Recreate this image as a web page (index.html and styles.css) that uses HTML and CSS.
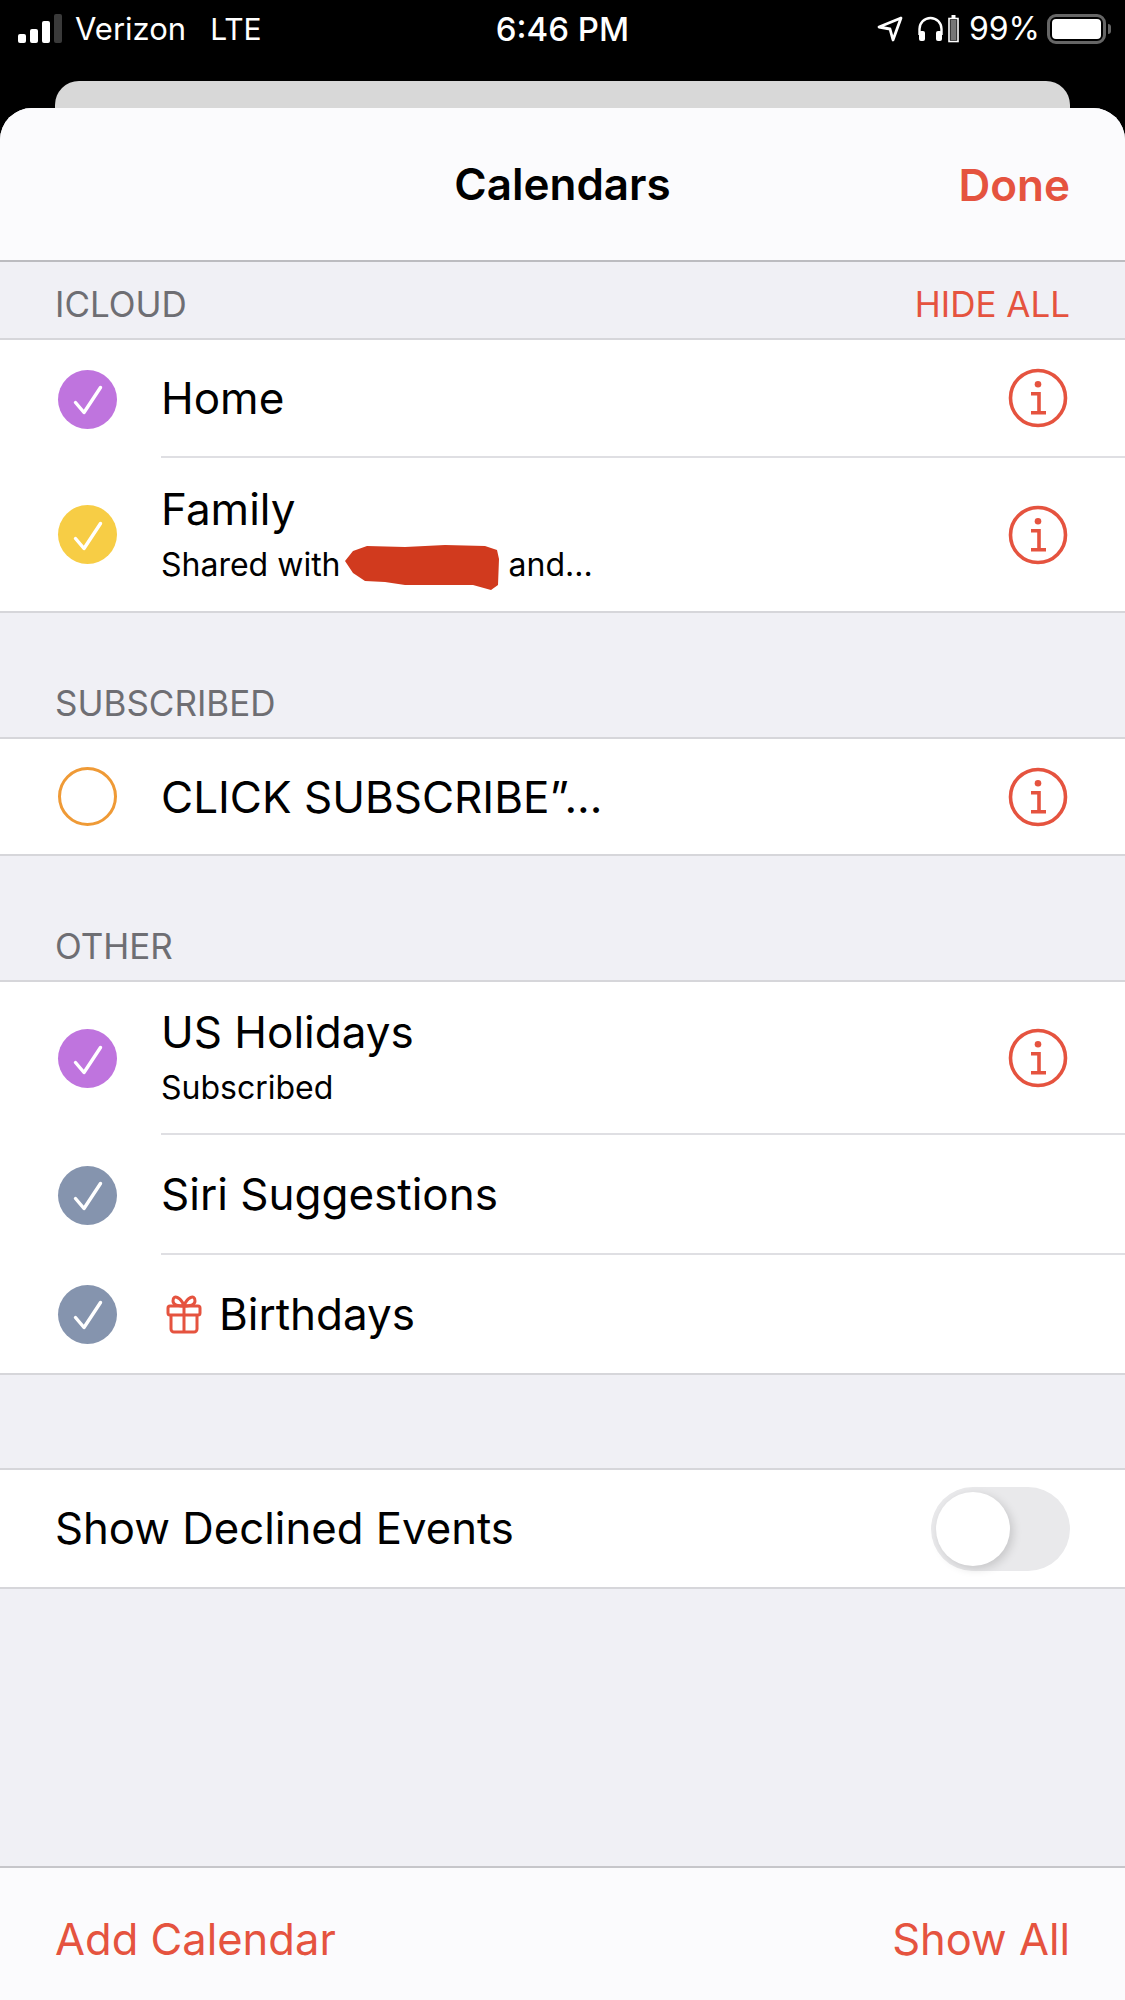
FILE: index.html
```html
<!DOCTYPE html>
<html lang="en">
<head>
    <meta charset="UTF-8">
    <link rel="stylesheet" href="styles.css">
    <title>Calendars</title>
</head>
<body>
    <div class="status-bar">
        <div class="status-left">
            <div class="signal">
                <span class="bar bar1"></span>
                <span class="bar bar2"></span>
                <span class="bar bar3"></span>
                <span class="bar bar4"></span>
            </div>
            <span class="carrier">Verizon</span>
            <span class="network">LTE</span>
        </div>
        <div class="status-time">6:46 PM</div>
        <div class="status-right">
            <svg class="arrow-icon" width="26" height="26" viewBox="0 0 26 26"><path d="M24 2 2 11l11 2 3 11z" fill="none" stroke="#fff" stroke-width="2.8" stroke-linejoin="round"/></svg>
            <svg class="phones-icon" width="27" height="26" viewBox="0 0 27 26"><path d="M2.5 19v-6a11 11 0 0 1 22 0v6" fill="none" stroke="#fff" stroke-width="2.4"/><rect x="2" y="15" width="6" height="10" rx="2" fill="#fff"/><rect x="19" y="15" width="6" height="10" rx="2" fill="#fff"/></svg>
            <svg class="mini-batt" width="11" height="28" viewBox="0 0 11 28"><rect x="3.5" y="0" width="4" height="3" fill="#fff"/><rect x="1" y="3.5" width="9" height="23" fill="none" stroke="#fff" stroke-width="1.6"/><rect x="2.5" y="5" width="6" height="20" fill="#777"/></svg>
            <span class="percent">99%</span>
            <div class="battery"><div class="battery-fill"></div></div>
            <div class="battery-tip"></div>
        </div>
    </div>

    <div class="back-card"></div>

    <div class="sheet">
        <div class="sheet-header">
            <h1>Calendars</h1>
            <span class="done">Done</span>
        </div>

        <div class="section-head first">
            <span>ICLOUD</span>
            <span class="hide-all">HIDE ALL</span>
        </div>
        <div class="group">
            <div class="row row-home">
                <span class="check purple"><svg width="46" height="46" viewBox="0 0 46 46"><path d="M10.5 26.5 19 36.5 35.5 11.5" fill="none" stroke="#fff" stroke-width="3.4" stroke-linecap="round" stroke-linejoin="round"/></svg></span>
                <div class="row-body">
                    <div class="row-text"><div class="title">Home</div></div>
                    <svg class="info" width="60" height="60" viewBox="0 0 60 60"><circle cx="30" cy="30" r="27.5" fill="none" stroke="#e5533f" stroke-width="3.6"/><circle cx="30" cy="16.3" r="3.3" fill="#e5533f"/><path d="M23 25.7h8v19M23 44.7h15" fill="none" stroke="#e5533f" stroke-width="3.6"/></svg>
                </div>
            </div>
            <div class="row row-tall last">
                <span class="check yellow"><svg width="46" height="46" viewBox="0 0 46 46"><path d="M10.5 26.5 19 36.5 35.5 11.5" fill="none" stroke="#fff" stroke-width="3.4" stroke-linecap="round" stroke-linejoin="round"/></svg></span>
                <div class="row-body">
                    <div class="row-text">
                        <div class="title">Family</div>
                        <div class="sub">Shared with<svg class="scribble" width="154" height="45" viewBox="0 0 154 45"><path d="M0 16 8 6 22 1 60 2 100 0 140 1 152 5 154 14 153 40 146 45 128 40 60 40 40 37 20 36 8 28z" fill="#d13a1e"/></svg>and...</div>
                    </div>
                    <svg class="info" width="60" height="60" viewBox="0 0 60 60"><circle cx="30" cy="30" r="27.5" fill="none" stroke="#e5533f" stroke-width="3.6"/><circle cx="30" cy="16.3" r="3.3" fill="#e5533f"/><path d="M23 25.7h8v19M23 44.7h15" fill="none" stroke="#e5533f" stroke-width="3.6"/></svg>
                </div>
            </div>
        </div>

        <div class="section-head">
            <span>SUBSCRIBED</span>
        </div>
        <div class="group">
            <div class="row row-single last">
                <span class="check ring"></span>
                <div class="row-body">
                    <div class="row-text"><div class="title">CLICK SUBSCRIBE&rdquo;...</div></div>
                    <svg class="info" width="60" height="60" viewBox="0 0 60 60"><circle cx="30" cy="30" r="27.5" fill="none" stroke="#e5533f" stroke-width="3.6"/><circle cx="30" cy="16.3" r="3.3" fill="#e5533f"/><path d="M23 25.7h8v19M23 44.7h15" fill="none" stroke="#e5533f" stroke-width="3.6"/></svg>
                </div>
            </div>
        </div>

        <div class="section-head">
            <span>OTHER</span>
        </div>
        <div class="group">
            <div class="row row-tall">
                <span class="check purple"><svg width="46" height="46" viewBox="0 0 46 46"><path d="M10.5 26.5 19 36.5 35.5 11.5" fill="none" stroke="#fff" stroke-width="3.4" stroke-linecap="round" stroke-linejoin="round"/></svg></span>
                <div class="row-body">
                    <div class="row-text">
                        <div class="title">US Holidays</div>
                        <div class="sub">Subscribed</div>
                    </div>
                    <svg class="info" width="60" height="60" viewBox="0 0 60 60"><circle cx="30" cy="30" r="27.5" fill="none" stroke="#e5533f" stroke-width="3.6"/><circle cx="30" cy="16.3" r="3.3" fill="#e5533f"/><path d="M23 25.7h8v19M23 44.7h15" fill="none" stroke="#e5533f" stroke-width="3.6"/></svg>
                </div>
            </div>
            <div class="row row-siri">
                <span class="check slate"><svg width="46" height="46" viewBox="0 0 46 46"><path d="M10.5 26.5 19 36.5 35.5 11.5" fill="none" stroke="#fff" stroke-width="3.4" stroke-linecap="round" stroke-linejoin="round"/></svg></span>
                <div class="row-body">
                    <div class="row-text"><div class="title">Siri Suggestions</div></div>
                </div>
            </div>
            <div class="row row-home last">
                <span class="check slate"><svg width="46" height="46" viewBox="0 0 46 46"><path d="M10.5 26.5 19 36.5 35.5 11.5" fill="none" stroke="#fff" stroke-width="3.4" stroke-linecap="round" stroke-linejoin="round"/></svg></span>
                <div class="row-body">
                    <div class="row-text row-inline">
                        <svg class="gift" width="36" height="40" viewBox="0 0 36 40"><g fill="none" stroke="#e5533f" stroke-width="3" stroke-linejoin="round"><rect x="2" y="12" width="32" height="9" rx="2"/><path d="M5 21v14a3 3 0 0 0 3 3h20a3 3 0 0 0 3-3V21M18 12v26"/><path d="M18 12C15 3 7 0 7 7c0 3 4 5 11 5zM18 12c3-9 11-12 11-5 0 3-4 5-11 5z"/></g></svg>
                        <div class="title">Birthdays</div>
                    </div>
                </div>
            </div>
        </div>

        <div class="group declined">
            <div class="row row-declined last plain">
                <div class="title">Show Declined Events</div>
                <div class="switch"><div class="knob"></div></div>
            </div>
        </div>

        <div class="spacer"></div>

        <div class="sheet-footer">
            <span>Add Calendar</span>
            <span>Show All</span>
        </div>
    </div>
</body>
</html>
```

FILE: styles.css
```css
/* Basic reset */
* {
    margin: 0;
    padding: 0;
    box-sizing: border-box;
}
body {
    width: 1125px;
    height: 2000px;
    background-color: #000;
    font-family: Inter, "Liberation Sans", sans-serif;
    display: flex;
    flex-direction: column;
    overflow: hidden;
}

/* status bar */
.status-bar {
    height: 81px;
    flex-shrink: 0;
    padding: 0 0 24px 18px;
    display: flex;
    align-items: center;
    justify-content: space-between;
    color: #fff;
    font-size: 31px;
    position: relative;
}
.status-left {
    display: flex;
    align-items: center;
}
.signal {
    display: flex;
    align-items: flex-end;
    gap: 4px;
    height: 29px;
    margin-right: 13px;
}
.bar {
    width: 8px;
    background-color: #fff;
    border-radius: 2px;
}
.bar1 { height: 9px; }
.bar2 { height: 14px; }
.bar3 { height: 22px; }
.bar4 { height: 29px; background-color: #3a3a3a; }
.network {
    margin-left: 24px;
    font-size: 30px;
}
.status-time {
    position: absolute;
    left: 0;
    right: 0;
    top: 9px;
    text-align: center;
    font-size: 33px;
    font-weight: 500;
}
.status-right {
    display: flex;
    align-items: center;
    padding-right: 14px;
}
.phones-icon {
    margin-left: 14px;
}
.mini-batt {
    margin-left: 4px;
}
.percent {
    margin-left: 10px;
    font-size: 32px;
}
.battery {
    width: 59px;
    height: 30px;
    margin-left: 7px;
    border: 3px solid #666;
    border-radius: 9px;
    padding: 2px;
}
.battery-fill {
    height: 100%;
    background-color: #fff;
    border-radius: 4px;
}
.battery-tip {
    width: 3px;
    height: 10px;
    margin-left: 2px;
    background-color: #666;
    border-radius: 0 3px 3px 0;
}

.back-card {
    height: 27px;
    flex-shrink: 0;
    margin: 0 55px;
    background-color: #d8d8d8;
    border-radius: 24px 24px 0 0;
}

/* sheet */
.sheet {
    flex: 1;
    display: flex;
    flex-direction: column;
    background-color: #f0f0f5;
    border-radius: 32px 32px 0 0;
    overflow: hidden;
}
.sheet-header {
    height: 154px;
    flex-shrink: 0;
    background-color: #fbfbfd;
    border-bottom: 2px solid #bcbcc0;
    display: flex;
    align-items: center;
    justify-content: center;
    position: relative;
}
.sheet-header h1 {
    font-size: 44px;
    font-weight: 600;
    color: #000;
}
.done {
    position: absolute;
    right: 55px;
    top: 50px;
    font-size: 44px;
    font-weight: 600;
    color: #e5533f;
}

.section-head {
    height: 124px;
    flex-shrink: 0;
    padding: 0 55px 13px;
    display: flex;
    align-items: flex-end;
    justify-content: space-between;
    font-size: 35px;
    color: #6e6e73;
}
.section-head.first {
    height: 76px;
}
.hide-all {
    color: #e5533f;
}

.group {
    background-color: #fff;
    border-top: 2px solid #d6d6da;
    border-bottom: 2px solid #d6d6da;
}
.row {
    display: flex;
    align-items: stretch;
    height: 119px;
    padding-left: 58px;
}
.row-home {
    height: 118px;
}
.row-tall {
    height: 153px;
}
.row-tall .row-text {
    padding-bottom: 3px;
}
.row-single {
    height: 115px;
}
.row-siri {
    height: 120px;
}
.row-declined {
    height: 117px;
}
.check {
    width: 59px;
    height: 59px;
    flex-shrink: 0;
    align-self: center;
    border-radius: 50%;
    display: flex;
    align-items: center;
    justify-content: center;
}
.purple { background-color: #bf74de; }
.yellow { background-color: #f7cd45; }
.slate { background-color: #8594ae; }
.ring {
    border: 3px solid #ef9a36;
    background-color: #fff;
}
.row-body {
    flex: 1;
    margin-left: 44px;
    padding-right: 57px;
    display: flex;
    align-items: center;
    justify-content: space-between;
    border-bottom: 2px solid #dfdfe3;
}
.last .row-body {
    border-bottom: none;
}
.row-inline {
    display: flex;
    align-items: center;
    gap: 17px;
}
.gift {
    margin-left: 5px;
}
.title {
    font-size: 44px;
    color: #000;
}
.sub {
    margin-top: 9px;
    font-size: 32px;
    color: #000;
    display: flex;
    align-items: center;
}
.scribble {
    flex-shrink: 0;
    margin: 0 10px -6px 4px;
}

.declined {
    margin-top: 93px;
}
.plain {
    padding: 0 55px;
    align-items: center;
    justify-content: space-between;
}
.plain .title {
    font-size: 43.7px;
}
.switch {
    width: 139px;
    height: 84px;
    background-color: #e9e9eb;
    border-radius: 42px;
    padding: 5px;
}
.knob {
    width: 74px;
    height: 74px;
    background-color: #fff;
    border-radius: 50%;
    box-shadow: 3px 3px 10px rgba(0, 0, 0, 0.15);
}

.spacer {
    flex: 1;
}
.sheet-footer {
    height: 134px;
    flex-shrink: 0;
    background-color: #fbfbfd;
    border-top: 2px solid #c6c6ca;
    padding: 10px 55px 0;
    display: flex;
    align-items: center;
    justify-content: space-between;
    font-size: 43.5px;
    color: #e5533f;
}
```
